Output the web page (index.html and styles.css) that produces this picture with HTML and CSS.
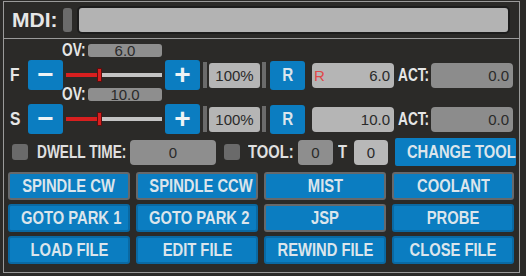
FILE: index.html
```html
<!DOCTYPE html>
<html lang="en">
<head>
    <meta charset="UTF-8">
    <meta name="viewport" content="width=device-width, initial-scale=1.0">
    <title>MDI panel</title>
    <link rel="stylesheet" href="styles.css">
</head>

<body>
    <!-- MDI 입력줄 -->
    <div class="mdi-panel">
        <span class="mdi-label">MDI:</span>
        <span class="mdi-handle"></span>
        <div class="mdi-input"></div>
    </div>

    <!-- 메인 패널 -->
    <div class="main-panel">
        <div class="ov-line">
            <span class="ov-label"><span class="nar">OV:</span></span>
            <span class="ov-box">6.0</span>
        </div>
        <div class="ctl-line">
            <span class="axis"><span class="nar">F</span></span>
            <button class="btn pm">&minus;</button>
            <div class="slider"><div class="fill"></div><div class="thumb"></div></div>
            <button class="btn pm plus">+</button>
            <span class="grip"></span>
            <span class="pct">100%</span>
            <span class="grip grip-r"></span>
            <button class="btn reset"><span class="nar">R</span></button>
            <span class="readout"><span class="red">R</span>6.0</span>
            <span class="act"><span class="nar">ACT:</span></span>
            <span class="act-box">0.0</span>
        </div>

        <div class="ov-line ov-second">
            <span class="ov-label"><span class="nar">OV:</span></span>
            <span class="ov-box">10.0</span>
        </div>
        <div class="ctl-line">
            <span class="axis"><span class="nar">S</span></span>
            <button class="btn pm">&minus;</button>
            <div class="slider"><div class="fill"></div><div class="thumb"></div></div>
            <button class="btn pm plus">+</button>
            <span class="grip"></span>
            <span class="pct">100%</span>
            <span class="grip grip-r"></span>
            <button class="btn reset"><span class="nar">R</span></button>
            <span class="readout"><span class="red"></span>10.0</span>
            <span class="act"><span class="nar">ACT:</span></span>
            <span class="act-box">0.0</span>
        </div>

        <div class="dwell-line">
            <span class="check"></span>
            <span class="lbl dwell-lbl"><span class="nar">DWELL TIME:</span></span>
            <span class="dwell-box">0</span>
            <span class="check check-tool"></span>
            <span class="lbl tool-lbl"><span class="nar">TOOL:</span></span>
            <span class="tool-box">0</span>
            <span class="lbl t-lbl"><span class="nar">T</span></span>
            <span class="tool-box light">0</span>
            <button class="btn change"><span class="nar">CHANGE TOOL</span></button>
        </div>

        <div class="btn-grid">
            <button class="btn grid-btn toggle"><span class="nar">SPINDLE CW</span></button>
            <button class="btn grid-btn toggle"><span class="nar">SPINDLE CCW</span></button>
            <button class="btn grid-btn toggle"><span class="nar">MIST</span></button>
            <button class="btn grid-btn toggle"><span class="nar">COOLANT</span></button>
            <button class="btn grid-btn"><span class="nar">GOTO PARK 1</span></button>
            <button class="btn grid-btn"><span class="nar">GOTO PARK 2</span></button>
            <button class="btn grid-btn toggle"><span class="nar">JSP</span></button>
            <button class="btn grid-btn"><span class="nar">PROBE</span></button>
            <button class="btn grid-btn"><span class="nar">LOAD FILE</span></button>
            <button class="btn grid-btn"><span class="nar">EDIT FILE</span></button>
            <button class="btn grid-btn"><span class="nar">REWIND FILE</span></button>
            <button class="btn grid-btn"><span class="nar">CLOSE FILE</span></button>
        </div>
    </div>
</body>
</html>
```

FILE: styles.css
```css
/* 기본 */
body {
    margin: 0;
    width: 526px;
    height: 276px;
    overflow: hidden;
    background-color: #2b2a28;
    font-family: "Liberation Sans", Arial, sans-serif;
    color: #e8e8e8;
}

/* Arial Narrow 느낌으로 좁히기 */
.nar {
    display: inline-block;
    white-space: nowrap;
    transform: scaleX(0.82);
}

/* MDI 줄 */
.mdi-panel {
    display: flex;
    align-items: center;
    margin: 1px 0 0 3px;
    width: 515px;
    height: 36px;
    border: 1px solid #9a9a9a;
    border-bottom: none;
}

.mdi-label {
    margin-left: 8px;
    font-weight: bold;
    font-size: 21px;
    color: #e6e6e6;
}

.mdi-handle {
    width: 9px;
    height: 24px;
    margin-left: 5px;
    background-color: #6b6b6b;
    border-radius: 3px;
}

.mdi-input {
    width: 429px;
    height: 24px;
    margin-left: 5px;
    background-color: #b3b3b3;
    border: 2px solid #1c1c1c;
    border-radius: 5px;
}

/* 메인 패널 */
.main-panel {
    margin-left: 3px;
    width: 515px;
    height: 233px;
    border: 1px solid #9a9a9a;
}

.ov-line {
    display: flex;
    align-items: center;
    height: 13px;
    margin-top: 5px;
    padding-left: 58px;
}

.ov-second {
    margin-top: -2px;
}

.ov-label {
    width: 26px;
    font-weight: bold;
    font-size: 18px;
    color: #e6e6e6;
}

.ov-label .nar,
.axis .nar,
.act .nar,
.lbl .nar {
    transform-origin: left center;
}

.ov-label .nar,
.act .nar,
.dwell-lbl .nar {
    transform: scaleX(0.76);
}

.ov-box {
    width: 74px;
    height: 13px;
    line-height: 13px;
    background-color: #8e8e8e;
    border-radius: 3px;
    text-align: center;
    font-size: 15px;
    color: #2a2a2a;
}

.ctl-line {
    display: flex;
    align-items: center;
    height: 30px;
    margin-top: 3px;
    padding-left: 6px;
}

.axis {
    width: 18px;
    font-weight: bold;
    font-size: 19px;
    color: #e6e6e6;
}

.btn {
    padding: 0;
    border: none;
    background-color: #0b7dc1;
    color: #dbe5ec;
    font-family: "Liberation Sans", Arial, sans-serif;
    font-weight: bold;
    white-space: nowrap;
    cursor: pointer;
}

.pm {
    width: 35px;
    height: 30px;
    border-radius: 3px;
    font-size: 28px;
    line-height: 30px;
    color: #eef3f6;
}

.plus {
    margin-left: 3px;
}

.slider {
    position: relative;
    width: 96px;
    height: 4px;
    margin-left: 3px;
    background-color: #c4c4c4;
}

.fill {
    width: 32px;
    height: 4px;
    background-color: #d81f1f;
}

.thumb {
    position: absolute;
    left: 31px;
    top: -5px;
    width: 3px;
    height: 12px;
    background-color: #d81f1f;
    border: 1px solid #5a1010;
}

.grip {
    width: 4px;
    height: 26px;
    margin-left: 3px;
    background-color: #6b6b6b;
}

.grip-r {
    margin-left: 2px;
}

.pct {
    width: 51px;
    height: 25px;
    margin-left: 2px;
    line-height: 25px;
    background-color: #b5b5b5;
    border-radius: 3px;
    text-align: center;
    font-size: 15px;
    color: #2a2a2a;
}

.reset {
    width: 35px;
    height: 29px;
    margin-left: 4px;
    border-radius: 3px;
    font-size: 18.5px;
}

.readout {
    display: flex;
    justify-content: space-between;
    width: 82px;
    height: 25px;
    margin-left: 7px;
    padding: 0 4px 0 2px;
    box-sizing: border-box;
    line-height: 25px;
    background-color: #b5b5b5;
    border-radius: 4px;
    font-size: 15px;
    color: #2a2a2a;
}

.red {
    color: #e04848;
}

.act {
    width: 33px;
    margin-left: 4px;
    font-weight: bold;
    font-size: 18px;
    color: #e6e6e6;
}

.act-box {
    width: 82px;
    height: 25px;
    padding-right: 4px;
    box-sizing: border-box;
    line-height: 25px;
    background-color: #8c8c8c;
    border-radius: 4px;
    text-align: right;
    font-size: 15px;
    color: #2a2a2a;
}

/* 드웰 / 툴 줄 */
.dwell-line {
    display: flex;
    align-items: center;
    height: 28px;
    margin-top: 4px;
    padding-left: 8px;
}

.check {
    width: 16px;
    height: 16px;
    background-color: #6a6a6a;
    border-radius: 3px;
}

.check-tool {
    margin-left: 8px;
}

.lbl {
    font-weight: bold;
    font-size: 18px;
    color: #e0e0e0;
}

.dwell-lbl {
    width: 88px;
    margin-left: 9px;
}

.tool-lbl {
    width: 47px;
    margin-left: 8px;
}

.t-lbl {
    width: 13px;
    margin-left: 5px;
}

.dwell-box {
    width: 86px;
    height: 25px;
    margin-left: 5px;
    line-height: 25px;
    background-color: #8e8e8e;
    border-radius: 4px;
    text-align: center;
    font-size: 15px;
    color: #2a2a2a;
}

.tool-box {
    width: 35px;
    height: 25px;
    margin-left: 3px;
    line-height: 25px;
    background-color: #8e8e8e;
    border-radius: 4px;
    text-align: center;
    font-size: 15px;
    color: #2a2a2a;
}

.tool-box.light {
    width: 34px;
    background-color: #b8b8b8;
}

.change {
    width: 121px;
    height: 28px;
    margin-left: 7px;
    border-radius: 2px;
    font-size: 18px;
}

/* 버튼 그리드 */
.btn-grid {
    display: grid;
    grid-template-columns: repeat(4, 122px);
    grid-auto-rows: 28px;
    gap: 4px 6px;
    margin-top: 6px;
    padding-left: 4px;
}

.grid-btn {
    border: 2px solid #0a69a3;
    border-radius: 3px;
    font-size: 18px;
}

.grid-btn.toggle {
    border-color: #66696c;
}
```
